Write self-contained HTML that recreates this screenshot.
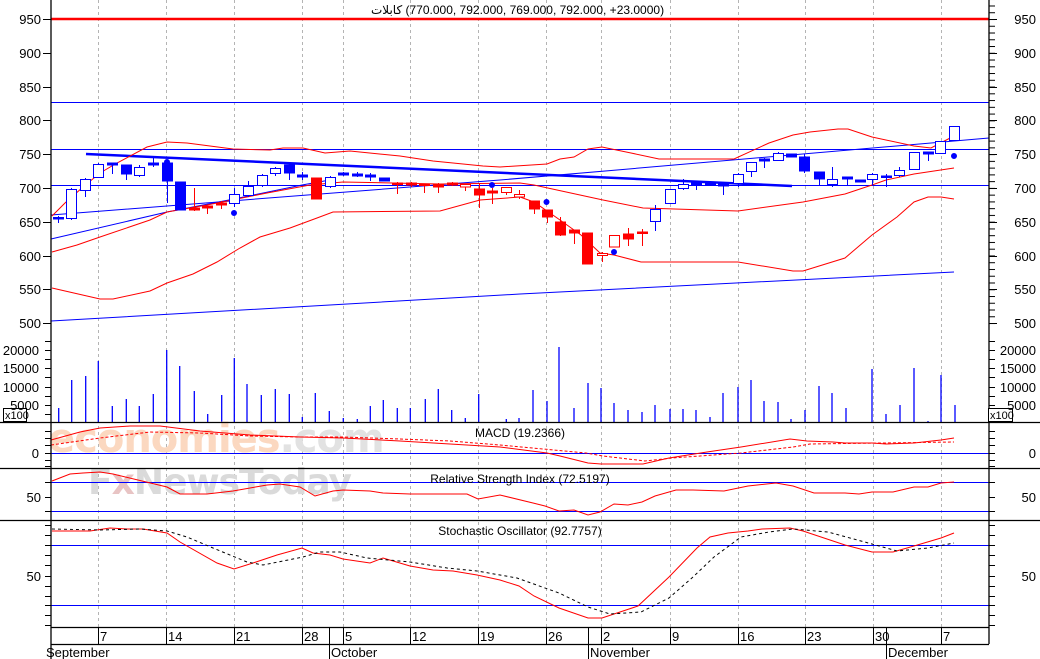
<!DOCTYPE html>
<html><head><meta charset="utf-8"><style>
html,body{margin:0;padding:0;background:#fff;}
svg{display:block;font-family:"Liberation Sans",Arial,sans-serif;}
</style></head><body>
<svg width="1040" height="659" viewBox="0 0 1040 659" xmlns="http://www.w3.org/2000/svg">
<defs>
<pattern id="tkL" patternUnits="userSpaceOnUse" x="0" y="19" width="10" height="6.756"><line x1="45" y1="0.5" x2="51" y2="0.5" stroke="#000"/></pattern>
<pattern id="tkR" patternUnits="userSpaceOnUse" x="0" y="19" width="1040" height="6.756"><line x1="989" y1="0.5" x2="995" y2="0.5" stroke="#000"/></pattern>
</defs>
<rect width="1040" height="659" fill="#fff"/>

<!-- grid -->
<g stroke="#b4b4b4" stroke-dasharray="3,3" stroke-width="1">
<line x1="98.5" y1="0" x2="98.5" y2="627"/><line x1="166.5" y1="0" x2="166.5" y2="627"/><line x1="234.5" y1="0" x2="234.5" y2="627"/><line x1="302.5" y1="0" x2="302.5" y2="627"/><line x1="343.5" y1="0" x2="343.5" y2="627"/><line x1="410.5" y1="0" x2="410.5" y2="627"/><line x1="478.5" y1="0" x2="478.5" y2="627"/><line x1="546.5" y1="0" x2="546.5" y2="627"/><line x1="601.5" y1="0" x2="601.5" y2="627"/><line x1="670.5" y1="0" x2="670.5" y2="627"/><line x1="738.5" y1="0" x2="738.5" y2="627"/><line x1="805.5" y1="0" x2="805.5" y2="627"/><line x1="873.5" y1="0" x2="873.5" y2="627"/><line x1="941.5" y1="0" x2="941.5" y2="627"/>
</g>

<!-- price panel lines -->
<line x1="51" y1="19" x2="989" y2="19" stroke="#f00" stroke-width="2.5"/>
<g stroke="#00f" stroke-width="1" fill="none">
<line x1="51" y1="102.5" x2="989" y2="102.5"/>
<line x1="51" y1="149.5" x2="989" y2="149.5"/>
<line x1="51" y1="185.5" x2="989" y2="185.5"/>
<polyline points="51,215 500,180 989,138"/>
<polyline points="51,239 167,212 234,199 302,185 330,180"/>
<polyline points="51,321 520,294 954,272"/>
<line x1="86" y1="154" x2="792" y2="186" stroke-width="2.5"/>
</g>
<g stroke="#f00" stroke-width="1" fill="none">
<polyline points="52,216 65,203 83,187 100,173 117,163 147,147 167,142 187,143 233,149 270,150 283,148 303,148 325,153 350,151 400,156 433,161 483,166 500,167 547,164 560,159 574,157 588,149 602,147 631,153 659,159 734,159 769,143 793,135 810,132 838,129 848,129 872,137 914,146 931,148 954,136"/>
<polyline points="52,252 77,245 100,237 150,220 167,212 207,205 267,193 310,185 343,182 440,184 520,183 534,185 603,200 643,208 738,211 803,202 845,194 872,185 886,180 914,174 954,168"/>
<polyline points="52,288 100,299 113,299 150,291 167,283 193,274 217,262 240,248 260,237 290,228 317,218 333,212 440,211 480,200 520,197 534,202 560,220 581,235 600,253 614,255 641,262 738,262 793,271 803,271 845,258 872,235 897,217 914,202 928,197 941,197 954,199"/>
</g>

<!-- candles -->
<g stroke-width="1">
<g stroke="#00f" fill="#00f">
<line x1="58.5" y1="216" x2="58.5" y2="223"/><rect x="53.5" y="217.5" width="10" height="1.5"/>
<line x1="71.5" y1="188" x2="71.5" y2="220"/><rect x="66.5" y="189.5" width="10" height="29" fill="#fff"/>
<line x1="85.5" y1="178" x2="85.5" y2="197"/><rect x="80.5" y="179.5" width="10" height="11" fill="#fff"/>
<line x1="98.5" y1="163" x2="98.5" y2="178"/><rect x="93.5" y="164.5" width="10" height="13" fill="#fff"/>
<line x1="112.5" y1="163" x2="112.5" y2="174"/><rect x="107.5" y="163" width="10" height="2"/>
<line x1="126.5" y1="165" x2="126.5" y2="180"/><rect x="121.5" y="165" width="10" height="9"/>
<line x1="139.5" y1="165" x2="139.5" y2="177"/><rect x="134.5" y="167.5" width="10" height="8" fill="#fff"/>
<line x1="153.5" y1="158" x2="153.5" y2="167"/><rect x="148.5" y="163" width="10" height="2"/>
<line x1="167.5" y1="160" x2="167.5" y2="203"/><rect x="162.5" y="163" width="10" height="18"/>
<rect x="175.5" y="182" width="10" height="28"/>
<line x1="234.5" y1="188" x2="234.5" y2="207"/><rect x="229.5" y="194.5" width="10" height="9" fill="#fff"/>
<line x1="248.5" y1="181" x2="248.5" y2="197"/><rect x="243.5" y="186.5" width="10" height="9" fill="#fff"/>
<line x1="262.5" y1="174" x2="262.5" y2="187"/><rect x="257.5" y="175.5" width="10" height="10" fill="#fff"/>
<line x1="275.5" y1="167" x2="275.5" y2="176"/><rect x="270.5" y="168.5" width="10" height="5" fill="#fff"/>
<line x1="289.5" y1="163" x2="289.5" y2="180"/><rect x="284.5" y="165" width="10" height="8"/>
<line x1="302.5" y1="172" x2="302.5" y2="180"/><rect x="297.5" y="175" width="10" height="2"/>
<line x1="330.5" y1="176" x2="330.5" y2="188"/><rect x="325.5" y="177.5" width="10" height="9" fill="#fff"/>
<line x1="343.5" y1="172" x2="343.5" y2="176"/><rect x="338.5" y="173" width="10" height="2"/>
<line x1="357.5" y1="172" x2="357.5" y2="177"/><rect x="352.5" y="174" width="10" height="2"/>
<line x1="370.5" y1="173" x2="370.5" y2="181"/><rect x="365.5" y="175" width="10" height="2"/>
<rect x="379.5" y="178" width="10" height="3"/>
<line x1="655.5" y1="205" x2="655.5" y2="231"/><rect x="650.5" y="209.5" width="10" height="12" fill="#fff"/>
<line x1="670.5" y1="189" x2="670.5" y2="204"/><rect x="665.5" y="189.5" width="10" height="14" fill="#fff"/>
<line x1="683.5" y1="179" x2="683.5" y2="190"/><rect x="678.5" y="184.5" width="10" height="4" fill="#fff"/>
<line x1="696.5" y1="182" x2="696.5" y2="190"/><rect x="691.5" y="182" width="10" height="3"/>
<rect x="705.5" y="183" width="10" height="2"/>
<line x1="723.5" y1="183" x2="723.5" y2="195"/><rect x="718.5" y="183" width="10" height="3"/>
<line x1="738.5" y1="173" x2="738.5" y2="187"/><rect x="733.5" y="174.5" width="10" height="9" fill="#fff"/>
<line x1="751.5" y1="162" x2="751.5" y2="177"/><rect x="746.5" y="162.5" width="10" height="9" fill="#fff"/>
<line x1="764.5" y1="158" x2="764.5" y2="168"/><rect x="759.5" y="159" width="10" height="2"/>
<line x1="778.5" y1="152" x2="778.5" y2="161"/><rect x="773.5" y="153.5" width="10" height="7" fill="#fff"/>
<rect x="786.5" y="154" width="10" height="3"/>
<line x1="804.5" y1="154" x2="804.5" y2="173"/><rect x="799.5" y="157" width="10" height="14"/>
<line x1="819.5" y1="172" x2="819.5" y2="185"/><rect x="814.5" y="172" width="10" height="7"/>
<line x1="832.5" y1="167" x2="832.5" y2="187"/><rect x="827.5" y="179.5" width="10" height="5" fill="#fff"/>
<line x1="847.5" y1="177" x2="847.5" y2="185"/><rect x="842.5" y="177" width="10" height="2"/>
<rect x="855.5" y="180" width="10" height="2"/>
<line x1="872.5" y1="173" x2="872.5" y2="185"/><rect x="867.5" y="174.5" width="10" height="5" fill="#fff"/>
<line x1="886.5" y1="174" x2="886.5" y2="187"/><rect x="881.5" y="176" width="10" height="1.5"/>
<line x1="899.5" y1="167" x2="899.5" y2="177"/><rect x="894.5" y="170.5" width="10" height="5" fill="#fff"/>
<rect x="909.5" y="152.5" width="10" height="17" fill="#fff"/>
<line x1="928.5" y1="152" x2="928.5" y2="161"/><rect x="923.5" y="152" width="10" height="2"/>
<rect x="935.5" y="141.5" width="10" height="12" fill="#fff"/>
<rect x="949.5" y="126.5" width="10" height="14" fill="#fff"/>
<circle cx="167" cy="162" r="2.5"/><circle cx="234" cy="213" r="2.5"/><circle cx="492" cy="185" r="2.5"/><circle cx="546.5" cy="202" r="2.5"/><circle cx="614" cy="252" r="2.5"/><circle cx="954" cy="156" r="2.5"/>
</g>
<g stroke="#f00" fill="#f00">
<line x1="194.5" y1="188" x2="194.5" y2="211"/><rect x="189.5" y="208" width="10" height="2"/>
<line x1="207.5" y1="206" x2="207.5" y2="214"/><rect x="202.5" y="206" width="10" height="2"/>
<line x1="221.5" y1="201" x2="221.5" y2="209"/><rect x="216.5" y="203" width="10" height="2"/>
<rect x="311.5" y="178" width="10" height="21"/>
<line x1="397.5" y1="182" x2="397.5" y2="194"/><rect x="392.5" y="183" width="10" height="1.5"/>
<line x1="411.5" y1="182" x2="411.5" y2="187"/><rect x="406.5" y="183" width="10" height="2"/>
<line x1="424.5" y1="184" x2="424.5" y2="193"/><rect x="419.5" y="184" width="10" height="1.5"/>
<line x1="438.5" y1="183" x2="438.5" y2="193"/><rect x="433.5" y="184" width="10" height="3"/>
<line x1="452.5" y1="182" x2="452.5" y2="186"/><rect x="447.5" y="183" width="10" height="2"/>
<line x1="465.5" y1="184" x2="465.5" y2="191"/><rect x="460.5" y="184.5" width="10" height="2.5" fill="#fff"/>
<line x1="479.5" y1="183" x2="479.5" y2="208"/><rect x="474.5" y="189" width="10" height="6"/>
<line x1="492.5" y1="188" x2="492.5" y2="204"/><rect x="487.5" y="191" width="10" height="2"/>
<line x1="506.5" y1="187" x2="506.5" y2="195"/><rect x="501.5" y="187.5" width="10" height="5" fill="#fff"/>
<line x1="519.5" y1="190" x2="519.5" y2="199"/><rect x="514.5" y="194.5" width="10" height="2.5" fill="#fff"/>
<line x1="534.5" y1="201" x2="534.5" y2="214"/><rect x="529.5" y="201" width="10" height="8"/>
<line x1="547.5" y1="210" x2="547.5" y2="223"/><rect x="542.5" y="210" width="10" height="7"/>
<line x1="560.5" y1="217" x2="560.5" y2="236"/><rect x="555.5" y="222" width="10" height="13"/>
<line x1="574.5" y1="230" x2="574.5" y2="244"/><rect x="569.5" y="230" width="10" height="3"/>
<rect x="582.5" y="233" width="10" height="31"/>
<line x1="602.5" y1="252" x2="602.5" y2="262"/><rect x="597.5" y="253.5" width="10" height="2" fill="#fff"/>
<rect x="609.5" y="235.5" width="10" height="11.5" fill="#fff"/>
<line x1="628.5" y1="228" x2="628.5" y2="246"/><rect x="623.5" y="234" width="10" height="5"/>
<line x1="642.5" y1="229" x2="642.5" y2="246"/><rect x="637.5" y="232" width="10" height="1.5"/>
</g>
</g>

<!-- volume -->
<g stroke="#00f" stroke-width="1.3">
<line x1="58.7" y1="408" x2="58.7" y2="422"/><line x1="71.7" y1="380" x2="71.7" y2="422"/><line x1="85.7" y1="376" x2="85.7" y2="422"/><line x1="98.3" y1="361" x2="98.3" y2="422"/><line x1="112.3" y1="406" x2="112.3" y2="422"/><line x1="126.3" y1="399" x2="126.3" y2="422"/><line x1="139.3" y1="406" x2="139.3" y2="422"/><line x1="153.3" y1="394" x2="153.3" y2="422"/><line x1="166.7" y1="350" x2="166.7" y2="422"/><line x1="179.7" y1="366" x2="179.7" y2="422"/><line x1="194.3" y1="391" x2="194.3" y2="422"/><line x1="207.7" y1="414" x2="207.7" y2="422"/><line x1="221.7" y1="395" x2="221.7" y2="422"/><line x1="234.3" y1="358" x2="234.3" y2="422"/><line x1="247" y1="384" x2="247" y2="422"/><line x1="261.3" y1="395" x2="261.3" y2="422"/><line x1="275.3" y1="389" x2="275.3" y2="422"/><line x1="289.3" y1="394" x2="289.3" y2="422"/><line x1="302.3" y1="417" x2="302.3" y2="422"/><line x1="315.3" y1="393" x2="315.3" y2="422"/><line x1="329.3" y1="411" x2="329.3" y2="422"/><line x1="343.3" y1="418" x2="343.3" y2="422"/><line x1="357.3" y1="419" x2="357.3" y2="422"/><line x1="370.3" y1="406" x2="370.3" y2="422"/><line x1="383.3" y1="400" x2="383.3" y2="422"/><line x1="397.3" y1="408" x2="397.3" y2="422"/><line x1="410.3" y1="408" x2="410.3" y2="422"/><line x1="425.3" y1="399" x2="425.3" y2="422"/><line x1="438.3" y1="389" x2="438.3" y2="422"/><line x1="451.7" y1="410" x2="451.7" y2="422"/><line x1="465.3" y1="418" x2="465.3" y2="422"/><line x1="478.7" y1="394" x2="478.7" y2="422"/><line x1="506.3" y1="419" x2="506.3" y2="422"/><line x1="519" y1="418" x2="519" y2="422"/><line x1="533" y1="390" x2="533" y2="422"/><line x1="547" y1="401" x2="547" y2="422"/><line x1="559" y1="347" x2="559" y2="422"/><line x1="574" y1="408" x2="574" y2="422"/><line x1="588" y1="383" x2="588" y2="422"/><line x1="601" y1="388" x2="601" y2="422"/><line x1="614" y1="403" x2="614" y2="422"/><line x1="628" y1="410" x2="628" y2="422"/><line x1="642" y1="412" x2="642" y2="422"/><line x1="655" y1="405" x2="655" y2="422"/><line x1="670" y1="409" x2="670" y2="422"/><line x1="683" y1="409" x2="683" y2="422"/><line x1="696" y1="410" x2="696" y2="422"/><line x1="710" y1="417" x2="710" y2="422"/><line x1="723" y1="393" x2="723" y2="422"/><line x1="738" y1="387" x2="738" y2="422"/><line x1="751" y1="380" x2="751" y2="422"/><line x1="764" y1="401" x2="764" y2="422"/><line x1="778" y1="402" x2="778" y2="422"/><line x1="791" y1="419" x2="791" y2="422"/><line x1="805" y1="410" x2="805" y2="422"/><line x1="819" y1="386" x2="819" y2="422"/><line x1="832" y1="393" x2="832" y2="422"/><line x1="846" y1="408" x2="846" y2="422"/><line x1="872" y1="369" x2="872" y2="422"/><line x1="886" y1="414" x2="886" y2="422"/><line x1="900" y1="405" x2="900" y2="422"/><line x1="914" y1="368" x2="914" y2="422"/><line x1="928" y1="421" x2="928" y2="422"/><line x1="941" y1="375" x2="941" y2="422"/><line x1="955" y1="405" x2="955" y2="422"/>
</g>

<!-- watermark -->
<g font-family="'DejaVu Sans','Liberation Sans',sans-serif" font-weight="bold">
<text x="48" y="452" font-size="40" fill="#fbd8c0" letter-spacing="-1">economies<tspan fill="#e2e2e2">.com</tspan></text>
<text x="88" y="494" font-size="36" fill="#dadada" letter-spacing="-1">F<tspan fill="#e8c4c4">x</tspan>NewsToday</text>
</g>

<!-- oscillator reference lines -->
<g stroke="#00f" stroke-width="1">
<line x1="51" y1="453.5" x2="989" y2="453.5"/>
<line x1="51" y1="482.5" x2="989" y2="482.5"/><line x1="51" y1="511.5" x2="989" y2="511.5"/>
<line x1="51" y1="545.5" x2="989" y2="545.5"/><line x1="51" y1="605.5" x2="989" y2="605.5"/>
</g>
<!-- MACD -->
<polyline fill="none" stroke="#f00" points="51,440 80,432 100,428 130,426 160,426 200,431 250,435 300,437 343,438 400,441 450,444 500,447 547,453 560,456 588,463 601,464 643,464 669,458 707,452 741,447 790,439 807,441 833,442 845,443 872,443 886,444 914,443 941,440 954,438"/>
<polyline fill="none" stroke="#f00" stroke-dasharray="3,2" points="51,445 100,438 150,432 200,433 250,436 300,437 343,437 400,439 450,441 500,445 586,453 603,456 645,461 672,458 741,453 793,447 810,444 954,442"/>
<!-- RSI -->
<polyline fill="none" stroke="#f00" points="52,481 70,474 83,473 100,472 113,474 167,487 180,494 207,494 233,491 267,485 280,484 300,487 315,496 333,491 343,490 370,491 383,493 410,494 467,494 478,499 500,495 533,503 545,506 559,511 574,510 588,515 600,512 614,504 628,505 642,502 655,496 676,490 693,490 724,491 748,486 776,483 793,486 814,493 845,493 859,494 872,492 893,492 914,487 928,487 941,483 954,482"/>
<!-- Stoch -->
<polyline fill="none" stroke="#f00" points="52,531 90,531 110,528 127,529 143,529 167,533 180,542 217,563 234,569 253,563 277,555 302,548 313,553 330,555 343,559 370,563 383,558 410,566 433,570 453,571 477,575 500,580 519,586 534,596 559,608 588,618 602,618 638,606 669,577 697,548 710,537 728,533 748,531 762,529 790,528 803,531 845,545 872,552 893,552 914,546 941,538 954,533"/>
<polyline fill="none" stroke="#000" stroke-dasharray="3,3" points="52,529 100,530 140,529 167,531 187,537 213,548 247,562 263,565 303,557 320,552 340,552 367,558 410,562 447,568 477,571 500,575 517,578 559,593 588,607 610,614 641,612 669,598 693,577 714,557 741,537 769,532 793,529 828,532 872,544 897,551 928,548 954,543"/>

<!-- panel separators / axes -->
<g stroke="#000" stroke-width="1.3">
<line x1="51" y1="0" x2="51" y2="659"/>
<line x1="989" y1="0" x2="989" y2="644"/>
<line x1="0" y1="422.5" x2="1040" y2="422.5"/>
<line x1="0" y1="468.5" x2="1040" y2="468.5"/>
<line x1="0" y1="520.5" x2="1040" y2="520.5"/>
<line x1="51" y1="627.5" x2="989" y2="627.5"/>
<line x1="51" y1="644.5" x2="989" y2="644.5"/>
</g>
<rect x="0" y="0" width="1040" height="327" fill="url(#tkL)"/>
<rect x="0" y="0" width="1040" height="327" fill="url(#tkR)"/>
<g stroke="#000">
<path d="M43 19.5h8M43 53.5h8M43 87.5h8M43 120.5h8M43 154.5h8M43 188.5h8M43 222.5h8M43 256.5h8M43 289.5h8M43 323.5h8"/>
<path d="M989 19.5h8M989 53.5h8M989 87.5h8M989 120.5h8M989 154.5h8M989 188.5h8M989 222.5h8M989 256.5h8M989 289.5h8M989 323.5h8"/>
<path d="M45 341.5h6M45 350.5h6M45 359.5h6M45 368.5h6M45 377.5h6M45 387.5h6M45 396.5h6M45 405.5h6M45 414.5h6"/>
<path d="M989 341.5h6M989 350.5h6M989 359.5h6M989 368.5h6M989 377.5h6M989 387.5h6M989 396.5h6M989 405.5h6M989 414.5h6"/>
<path d="M45 431.5h6M45 438.5h6M45 445.5h6M45 453.5h6M45 460.5h6M45 466.5h6M989 431.5h6M989 438.5h6M989 445.5h6M989 453.5h6M989 460.5h6M989 466.5h6"/>
<path d="M45 482.5h6M45 497.5h6M45 511.5h6M989 482.5h6M989 497.5h6M989 511.5h6"/>
<path d="M45 525.5h6M45 535.5h6M45 545.5h6M45 555.5h6M45 565.5h6M45 576.5h6M45 586.5h6M45 596.5h6M45 605.5h6M45 615.5h6M45 625.5h6"/>
<path d="M989 525.5h6M989 535.5h6M989 545.5h6M989 555.5h6M989 565.5h6M989 576.5h6M989 586.5h6M989 596.5h6M989 605.5h6M989 615.5h6M989 625.5h6"/>
<path d="M98.5 627v17M166.5 627v17M234.5 627v17M302.5 627v17M343.5 627v17M410.5 627v17M478.5 627v17M546.5 627v17M601.5 627v17M670.5 627v17M738.5 627v17M805.5 627v17M873.5 627v17M941.5 627v17"/>
<path d="M329.5 627v32M588.5 627v32M886.5 627v32"/>
</g>
<rect x="3.5" y="408.5" width="23" height="13" fill="#fff" stroke="#000"/>
<rect x="988.5" y="408.5" width="24" height="13" fill="#fff" stroke="#000"/>

<!-- labels -->
<g font-size="13" fill="#000">
<g text-anchor="end">
<text x="41" y="24">950</text><text x="41" y="58">900</text><text x="41" y="92">850</text><text x="41" y="125">800</text><text x="41" y="159">750</text><text x="41" y="193">700</text><text x="41" y="227">650</text><text x="41" y="261">600</text><text x="41" y="294">550</text><text x="41" y="328">500</text>
<text x="39" y="355">20000</text><text x="39" y="373">15000</text><text x="39" y="392">10000</text><text x="39" y="410">5000</text>
<text x="39" y="458">0</text><text x="41" y="502">50</text><text x="41" y="581">50</text>
<text x="1036" y="24">950</text><text x="1036" y="58">900</text><text x="1036" y="92">850</text><text x="1036" y="125">800</text><text x="1036" y="159">750</text><text x="1036" y="193">700</text><text x="1036" y="227">650</text><text x="1036" y="261">600</text><text x="1036" y="294">550</text><text x="1036" y="328">500</text>
<text x="1036" y="355">20000</text><text x="1036" y="373">15000</text><text x="1036" y="392">10000</text><text x="1036" y="410">5000</text>
<text x="1036" y="458">0</text><text x="1036" y="502">50</text><text x="1036" y="581">50</text>
</g>
<text x="5" y="419" font-size="11">x100</text><text x="990" y="419" font-size="11">x100</text>
<g font-size="12">
<text x="371" y="14" direction="ltr" unicode-bidi="embed" font-family="'Liberation Sans','DejaVu Sans',sans-serif">&#x200E;كابلات&#x200E; (770.000, 792.000, 769.000, 792.000, +23.0000)</text>
<g text-anchor="middle">
<text x="520" y="437">MACD (19.2366)</text>
<text x="520" y="483">Relative Strength Index (72.5197)</text>
<text x="520" y="535">Stochastic Oscillator (92.7757)</text>
</g>
</g>
<g font-size="13">
<text x="100" y="641">7</text><text x="168" y="641">14</text><text x="236" y="641">21</text><text x="304" y="641">28</text><text x="345" y="641">5</text><text x="412" y="641">12</text><text x="480" y="641">19</text><text x="548" y="641">26</text><text x="603" y="641">2</text><text x="672" y="641">9</text><text x="740" y="641">16</text><text x="807" y="641">23</text><text x="875" y="641">30</text><text x="943" y="641">7</text>
<text x="46" y="657">September</text><text x="331" y="657">October</text><text x="590" y="657">November</text><text x="888" y="657">December</text>
</g>
</g>
</svg>
</body></html>
